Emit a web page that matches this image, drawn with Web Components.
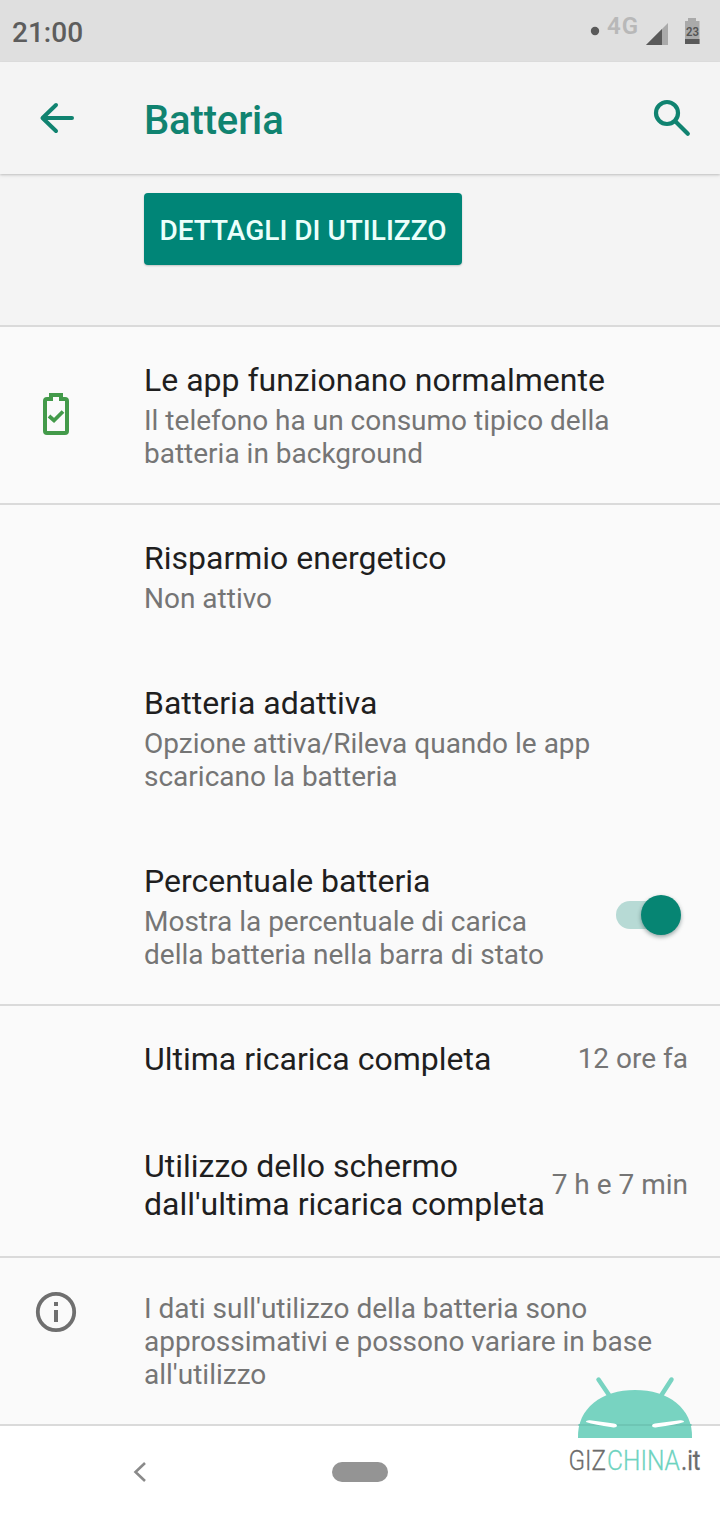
<!DOCTYPE html>
<html lang="it">
<head>
<meta charset="utf-8">
<title>Batteria</title>
<style>
html,body{margin:0;padding:0}
body{width:720px;height:1520px;overflow:hidden;background:#fafafa;font-family:Roboto,"Noto Sans",sans-serif}
</style>
</head>
<body>
<battery-screen></battery-screen>
<script>
const define = (name, markup) => customElements.define(name, class extends HTMLElement {
  constructor() {
    super();
    const t = document.createElement('template');
    t.innerHTML = markup;
    this.attachShadow({mode: 'open'}).append(t.content.cloneNode(true));
  }
});

define('status-bar', `
<style>
:host{display:flex;align-items:center;height:62px;box-sizing:border-box;background:#dfdfdf;color:#5d5d5d;padding:0 20px 0 12px}
.time{font-size:28px;font-weight:500;line-height:34px;flex:1;padding-top:3px}
svg{display:block}
</style>
<span class="time">21:00</span>
<svg width="112" height="62" viewBox="588 0 112 62" font-family="Roboto,sans-serif">
  <circle cx="595" cy="31" r="4.2" fill="#5a5a5a"/>
  <text x="607" y="34" font-size="24" font-weight="600" fill="#b8b8b8" textLength="31">4G</text>
  <path d="M646 45L668 23V45Z" fill="#aaa"/>
  <path d="M646 45L662 29V45Z" fill="#5a5a5a"/>
  <path d="M688 18h8v3h3.500v23h-14.500V21h3z" fill="#aaa"/>
  <path d="M685 39h14.500v5H685z" fill="#5a5a5a"/>
  <text x="686" y="36" font-size="12.500" font-weight="600" fill="#555" textLength="13" lengthAdjust="spacingAndGlyphs">23</text>
</svg>`);

define('app-bar', `
<style>
:host{display:flex;align-items:center;height:112px;background:#f4f4f4;position:relative;z-index:1;box-shadow:0 1px 2px rgba(0,0,0,.16),0 2px 4px rgba(0,0,0,.06)}
h1{margin:0;font-size:40px;line-height:48px;font-weight:500;color:#108370;flex:1;padding-top:6px;letter-spacing:-.15px}
.back{width:144px}.search{width:72px}
svg{display:block}
</style>
<svg class="back" height="112" viewBox="0 62 144 112" fill="none" stroke="#108370" stroke-width="4" stroke-linecap="round" stroke-linejoin="round"><path d="M72 118H43M56 105L42.500 118L56 131"/></svg>
<h1><slot></slot></h1>
<svg class="search" height="112" viewBox="648 62 72 112" fill="none" stroke="#108370" stroke-width="4.200"><circle cx="667" cy="113" r="11"/><path d="M675.500 121.500L687.800 133.800" stroke-linecap="round"/></svg>`);

define('usage-action', `
<style>
:host{display:block;height:151px;box-sizing:border-box;background:#f4f4f4;padding:19px 0 0 144px}
button{display:block;width:318px;height:72px;padding:4px 0 0;border:0;border-radius:4px;background:#008577;color:#ecfffb;font:500 28px/34px Roboto,sans-serif;white-space:nowrap;box-shadow:0 1px 2px rgba(0,0,0,.2)}
</style>
<button><slot></slot></button>`);

define('pref-row', `
<style>
:host{display:grid;grid-template-columns:144px 1fr auto;align-items:center;box-sizing:border-box;padding:36px 32px 33px 0;background:#fafafa;position:relative}
:host([divided])::before{content:"";position:absolute;left:0;right:0;top:0;height:2px;background:#dadada}
.icon{align-self:center}
.title{display:block;font-size:32px;line-height:38px;color:#1f1f1f;white-space:nowrap}
.summary{display:block;font-size:28px;line-height:33px;color:#757575;white-space:nowrap}
:host([both]) .summary{margin-top:5px}
.end{font-size:28px;line-height:33px;color:#757575;white-space:nowrap;padding-bottom:1px}
::slotted([slot=icon]){display:block}
</style>
<div class="icon"><slot name="icon"></slot></div>
<div class="text"><span class="title"><slot name="title"></slot></span><span class="summary"><slot></slot></span></div>
<div class="end"><slot name="end"></slot></div>`);

define('battery-ok-icon', `
<style>:host{display:block;height:48px;margin:0 0 4px 32px}svg{display:block}</style>
<svg width="48" height="48" viewBox="32 390 48 48"><g fill="none" stroke="#439a4a" stroke-width="4"><path d="M51 395V399H47Q45 399 45 401V431Q45 433 47 433H65Q67 433 67 431V401Q67 399 65 399H61V395Z"/><path d="M49 416L54 420.500L63 411.500" stroke-width="3.800"/></g></svg>`);

define('info-icon', `
<style>:host{display:block;height:48px;margin:0 0 0 32px}svg{display:block}</style>
<svg width="48" height="48" viewBox="32 1288 48 48"><circle cx="56" cy="1312" r="18.200" fill="none" stroke="#6f6f6f" stroke-width="3.800"/><path d="M54 1302h4v4h-4zM54 1310h4v12h-4z" fill="#6f6f6f"/></svg>`);

define('toggle-switch', `
<style>
:host{display:flex;align-items:center;justify-content:flex-end;width:65px;height:28px;margin:0 7px 2px 0;border-radius:14px;background:linear-gradient(#b7dad5,#b7dad5) 0/50px 28px no-repeat}
i{display:block;width:40px;height:40px;flex:none;border-radius:50%;background:#068573;box-shadow:0 2px 4px rgba(0,40,40,.4)}
</style><i></i>`);

define('nav-bar', `
<style>
:host{display:grid;grid-template-columns:332px 56px 1fr;align-items:center;height:96px;box-sizing:border-box;border-top:2px solid #dadada;background:#fff}
.home{height:20px;border-radius:10px;background:#949494;margin-top:-2px}
svg{display:block}
</style>
<svg width="332" height="94" viewBox="0 1426 332 94" fill="none" stroke="#8a8a8a" stroke-width="2.600"><path d="M145 1463L135.500 1472L145 1481"/></svg>
<div class="home"></div>`);

define('brand-mark', `
<style>
:host{position:absolute;left:560px;top:1370px;width:150px;height:110px}
svg{display:block}
</style>
<svg width="150" height="110" viewBox="560 1370 150 110" font-family="Roboto,sans-serif">
  <path d="M578 1438C577 1408 602 1390 635 1390S693 1408 692 1438Z" fill="#78d3c1"/>
  <path d="M578.500 1424H691.500V1426H578.500Z" fill="#6ec5b4"/>
  <path d="M598.500 1379.500L609 1395M671.500 1379.500L661.500 1395" stroke="#78d3c1" stroke-width="4.500" stroke-linecap="round"/>
  <path d="M586 1422Q586 1420 590 1420.300L614 1423.600Q617 1424.200 617 1425.800Q617 1428 612 1427.300Q595 1425 586 1422ZM684 1422Q684 1420 680 1420.300L655 1423.600Q652 1424.200 652 1425.800Q652 1428 657 1427.300Q675 1425 684 1422Z" fill="#fff"/>
  <g font-size="28" font-weight="300" stroke-width=".3">
  <text x="568.500" y="1469.500" fill="#6c6c6c" stroke="#6c6c6c" textLength="37.500" lengthAdjust="spacingAndGlyphs">GIZ</text>
  <text x="607" y="1469.500" fill="#6ed3bf" stroke="#6ed3bf" textLength="73" lengthAdjust="spacingAndGlyphs">CHINA</text>
  <text x="681" y="1469.500" fill="#6c6c6c" stroke="#6c6c6c" font-weight="400" textLength="19.500" lengthAdjust="spacingAndGlyphs">.it</text>
  </g>
</svg>`);

define('battery-screen', `
<style>
:host{display:block;position:relative;width:720px;height:1520px}
</style>
<status-bar></status-bar>
<app-bar>Batteria</app-bar>
<usage-action>DETTAGLI DI UTILIZZO</usage-action>
<pref-row divided both><battery-ok-icon slot="icon"></battery-ok-icon><span slot="title">Le app funzionano normalmente</span>Il telefono ha un consumo tipico della<br>batteria in background</pref-row>
<pref-row divided both><span slot="title">Risparmio energetico</span>Non attivo</pref-row>
<pref-row both><span slot="title">Batteria adattiva</span>Opzione attiva/Rileva quando le app<br>scaricano la batteria</pref-row>
<pref-row both><span slot="title">Percentuale batteria</span>Mostra la percentuale di carica<br>della batteria nella barra di stato<toggle-switch slot="end"></toggle-switch></pref-row>
<pref-row divided><span slot="title">Ultima ricarica completa</span><span slot="end">12 ore fa</span></pref-row>
<pref-row><span slot="title">Utilizzo dello schermo<br>dall'ultima ricarica completa</span><span slot="end">7 h e 7 min</span></pref-row>
<pref-row divided><info-icon slot="icon" style="margin-top:-4px;margin-bottom:55px"></info-icon>I dati sull'utilizzo della batteria sono<br>approssimativi e possono variare in base<br>all'utilizzo</pref-row>
<nav-bar></nav-bar>
<brand-mark></brand-mark>`);
</script>
</body>
</html>
